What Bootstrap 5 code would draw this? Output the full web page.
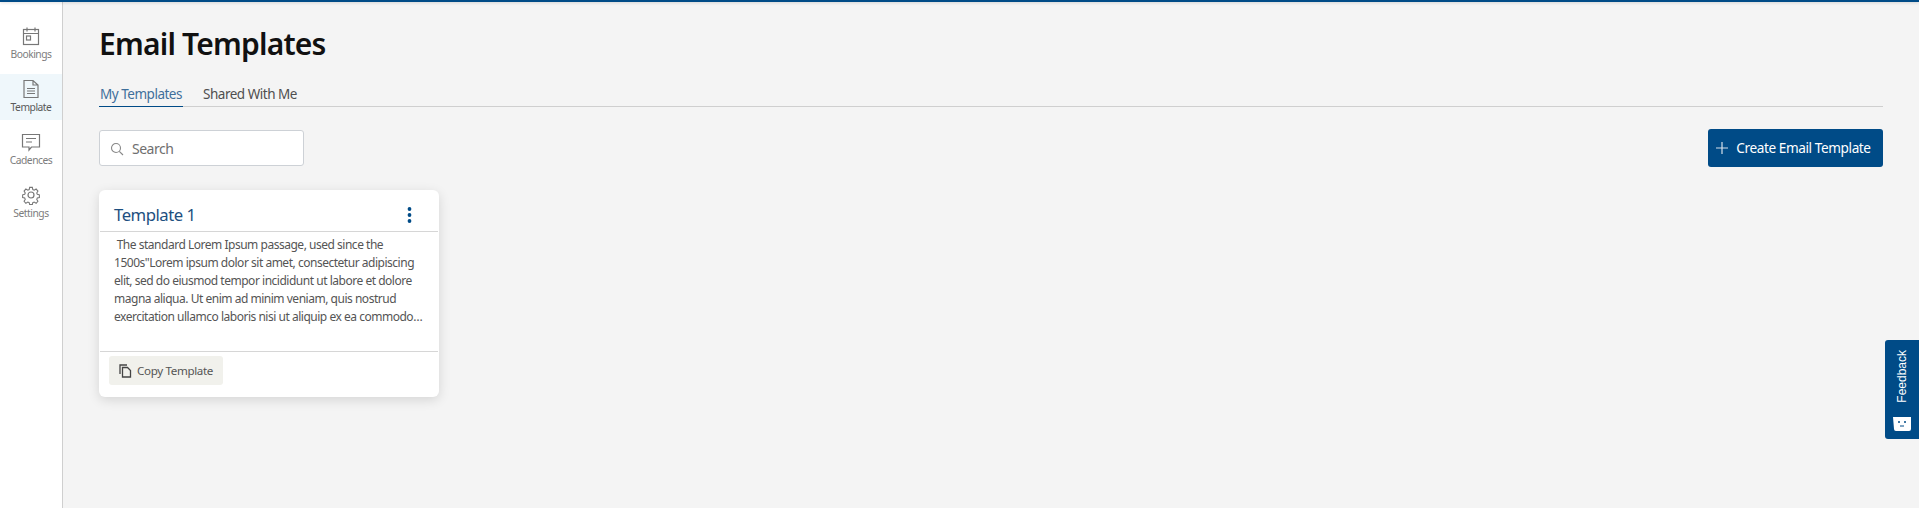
<!DOCTYPE html>
<html lang="en">
<head>
    <meta charset="UTF-8">
    <meta name="viewport" content="width=device-width, initial-scale=1.0">
    <title>Email Templates</title>
    <link href="https://cdn.jsdelivr.net/npm/bootstrap@5.3.0/dist/css/bootstrap.min.css" rel="stylesheet">
    <style>
        body {
            background-color: #f4f4f4;
            font-family: "Noto Sans", "Liberation Sans", sans-serif;
            letter-spacing: -.03em;
            color: #4a4a4a;
            height: 508px;
            overflow: hidden;
        }
        .top-stripe { height: 2px; background-color: #004b87; box-shadow: 0 1px 3px rgba(0,0,0,.15); position: relative; }
        .page-wrap { height: 506px; }
        .side-rail {
            width: 63px;
            flex: none;
            background-color: #fff;
            border-right: 1px solid #cfcfcf;
            padding-top: 19px;
        }
        .rail-item {
            height: 46px;
            margin-bottom: 7px;
            font-size: 10.3px;
            line-height: 13px;
            color: #7d7d7d;
            padding-top: 5px;
        }
        .rail-item svg { display: block; margin-bottom: 2px; }
        .rail-item.is-active { background-color: #eff7fb; color: #5a5a5a; }
        .main-area { padding: 0 36px 0 36px; min-width: 0; }
        .page-title {
            font-size: 30px;
            font-weight: 600;
            letter-spacing: -.8px;
            line-height: 40px;
            color: #111;
            margin: 22px 0 0;
        }
        .tab-strip {
            margin-top: 19px;
            height: 24px;
            border-bottom: 1px solid #cfcfcf;
        }
        .tab-link {
            font-size: 13.5px;
            line-height: 22px;
            height: 24px;
            padding: 0 1px;
            margin-right: 19px;
            color: #4f4f4f;
        }
        .tab-link.is-active { color: #3f6f9b; border-bottom: 1px solid #004b87; }
        .search-row { margin-top: 22px; }
        .search-box {
            width: 205px;
            height: 36px;
            background-color: #fff;
            border: 1px solid #cdd1d6;
            border-radius: 3px;
            padding: 1px 0 0 10px;
            gap: 8px;
            font-size: 14px;
            color: #6f6f6f;
        }
        .create-btn {
            height: 38px;
            width: 175px;
            background-color: #004b87;
            border-radius: 3px;
            border: 0;
            color: #fff;
            font-size: 13.6px;
            letter-spacing: -.03em;
            padding: 0 5px 0 0;
            gap: 7px;
        }
        .create-btn:hover { background-color: #004b87; color: #fff; }
        .tpl-card {
            width: 340px;
            height: 207px;
            margin-top: 23px;
            background-color: #fff;
            border-radius: 6px;
            box-shadow: 0 3px 12px rgba(0,0,0,.13);
        }
        .tpl-head {
            height: 42px;
            padding: 9px 26px 0 14px;
            border-bottom: 1px solid #d6d6d6;
            margin: 0 1px;
            font-size: 16.7px;
            color: #1d4f80;
        }
        .tpl-body {
            height: 120px;
            padding: 4px 12px 0 14px;
            font-size: 12px;
            line-height: 18px;
            color: #555;
            border-bottom: 1px solid #d6d6d6;
            margin: 0 1px;
        }
        .tpl-clamp {
            display: -webkit-box;
            -webkit-line-clamp: 5;
            -webkit-box-orient: vertical;
            overflow: hidden;
        }
        .tpl-copy {
            width: 114px;
            height: 29px;
            margin: 4px 0 0 10px;
            background-color: #f1f1ec;
            border-radius: 3px;
            border: 0;
            padding: 0 0 0 10px;
            gap: 5px;
            font-size: 11.6px;
            letter-spacing: -.03em;
            color: #555;
        }
        .feedback-tab {
            position: fixed;
            right: 0;
            top: 340px;
            width: 34px;
            height: 99px;
            background-color: #004b87;
            border-radius: 3px 0 0 3px;
            color: #fff;
            padding: 10px 0 8px;
        }
        .feedback-text {
            writing-mode: vertical-rl;
            transform: rotate(180deg);
            font-family: "Liberation Sans", sans-serif;
            letter-spacing: 0;
            font-size: 12px;
            line-height: 14px;
        }
    </style>
</head>
<body>
    <div class="top-stripe"></div>
    <div class="d-flex page-wrap">
        <div class="side-rail">
            <div class="rail-item d-flex flex-column align-items-center">
                <svg width="20" height="20" viewBox="0 0 20 20" fill="none" stroke="#777" stroke-width="1.2"><rect x="2.5" y="3.5" width="15" height="15"/><path d="M2.5 7.5h15M6 1.5v4M14 1.5v4"/><rect x="5.5" y="10" width="4" height="4"/></svg>
                Bookings
            </div>
            <div class="rail-item is-active d-flex flex-column align-items-center">
                <svg width="20" height="20" viewBox="0 0 20 20" fill="none" stroke="#777" stroke-width="1.2"><path d="M3 1.500h9l5 4.500v12.500H3zM12 1.500V6h5M6 9.500h8M6 12h8M6 14.500h8"/></svg>
                Template
            </div>
            <div class="rail-item d-flex flex-column align-items-center">
                <svg width="20" height="20" viewBox="0 0 20 20" fill="none" stroke="#777" stroke-width="1.2"><path d="M1.5 2.5h17v12.5h-8l-2.500 3v-3H1.500zM5 6.500h10M5 10h6"/></svg>
                Cadences
            </div>
            <div class="rail-item d-flex flex-column align-items-center">
                <svg width="20" height="20" viewBox="0 0 20 20" fill="none" stroke="#777" stroke-width="1.2"><circle cx="10" cy="10" r="3"/><path d="M8.500 1.500h3l.5 2.500 1.500.7 2.200-1.300 2 2.200-1.300 2.100.6 1.500 2.300.6v3l-2.300.6-.6 1.500 1.300 2.100-2 2.200-2.200-1.300-1.500.7-.5 2.100h-3l-.5-2.100-1.500-.7-2.200 1.300-2-2.200 1.300-2.100-.6-1.500-2.300-.6v-3l2.300-.6.6-1.500-1.300-2.100 2-2.200 2.200 1.300 1.500-.7z" transform="translate(1 1) scale(.9)"/></svg>
                Settings
            </div>
        </div>
        <div class="main-area flex-grow-1">
            <h1 class="page-title">Email Templates</h1>
            <div class="tab-strip d-flex">
                <div class="tab-link is-active">My Templates</div>
                <div class="tab-link">Shared With Me</div>
            </div>
            <div class="search-row d-flex justify-content-between align-items-center">
                <div class="search-box d-flex align-items-center">
                    <svg width="14" height="14" viewBox="0 0 14 14" fill="none" stroke="#888" stroke-width="1.100"><circle cx="6" cy="6" r="4.500"/><path d="M9.300 9.300 13 13"/></svg>
                    <span>Search</span>
                </div>
                <button class="btn create-btn d-flex align-items-center justify-content-center" type="button">
                    <svg width="14" height="14" viewBox="0 0 14 14" fill="none" stroke="#d5e0ea" stroke-width="1.200"><path d="M7 1v12M1 7h12"/></svg>
                    Create Email Template
                </button>
            </div>
            <div class="tpl-card">
                <div class="tpl-head d-flex justify-content-between align-items-center">
                    <span>Template 1</span>
                    <svg width="5" height="16" viewBox="0 0 5 16" fill="#004b87"><circle cx="2.500" cy="2" r="1.900"/><circle cx="2.500" cy="8" r="1.900"/><circle cx="2.500" cy="14" r="1.900"/></svg>
                </div>
                <div class="tpl-body"><div class="tpl-clamp">&nbsp;The standard Lorem Ipsum passage, used since the 1500s"Lorem ipsum dolor sit amet, consectetur adipiscing elit, sed do eiusmod tempor incididunt ut labore et dolore magna aliqua. Ut enim ad minim veniam, quis nostrud exercitation ullamco laboris nisi ut aliquip ex ea commodo consequat.</div></div>
                <button class="btn tpl-copy d-flex align-items-center" type="button">
                    <svg width="13" height="14" viewBox="0 0 13 14" fill="none" stroke="#444" stroke-width="1.300"><path d="M1 10V1h7"/><path d="M3.500 3.500h5l3 3v6.500h-8z"/></svg>
                    Copy Template
                </button>
            </div>
        </div>
    </div>
    <div class="feedback-tab d-flex flex-column align-items-center justify-content-between">
        <span class="feedback-text">Feedback</span>
        <svg width="18" height="14" viewBox="0 0 18 14" fill="#fff"><path d="M0 0h18v12a2 2 0 0 1-2 2H3a2 2 0 0 1-2-2z"/><circle cx="6" cy="5" r="1" fill="#004b87"/><circle cx="12" cy="5" r="1" fill="#004b87"/><path d="M7 9h4" stroke="#004b87"/></svg>
    </div>
</body>
</html>
